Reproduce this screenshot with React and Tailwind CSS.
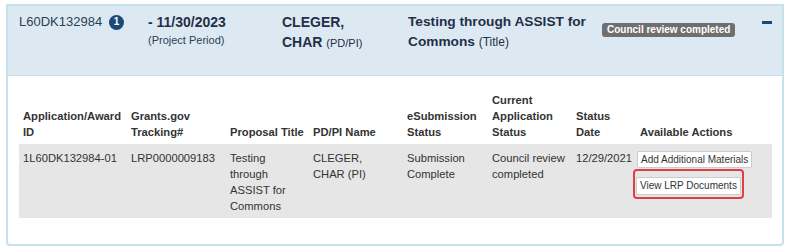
import React from "react";

const font = { fontFamily: '"Liberation Sans", Arial, sans-serif' };

function Header() {
    return (
        <div className="flex items-start bg-[#dde9f2] border-b border-[#c6dfe9] h-[70px] pl-[11px] pr-[10px] pt-[6px]">
            <div className="w-[129px] flex items-center gap-[7px] text-[13px] text-[#2c3e55] leading-[20px]">
                <span>L60DK132984</span>
                <span className="inline-flex items-center justify-center w-[15px] h-[15px] rounded-full bg-[#1c4a78] text-white text-[10px] font-bold leading-none">
                    1
                </span>
            </div>
            <div className="w-[134px] text-[#1f3049]">
                <div className="text-[14px] font-bold leading-[20px]">- 11/30/2023</div>
                <div className="text-[11px] leading-[16px] text-[#2c3e55]">(Project Period)</div>
            </div>
            <div className="w-[126px] text-[14px] font-bold leading-[20px] text-[#1f3049]">
                CLEGER,
                <br />
                CHAR <span className="text-[11px] leading-[14px] font-normal">(PD/PI)</span>
            </div>
            <div className="w-[194px] text-[13.7px] font-bold leading-[20px] text-[#1f3049]">
                Testing through ASSIST for
                <br />
                Commons <span className="text-[12px] leading-[14px] font-normal">(Title)</span>
            </div>
            <div className="mt-[4px]">
                <span className="inline-block rounded-[3px] bg-[#6f6f6f] px-[5px] py-[1px] text-[10px] font-bold leading-[12px] text-white">
                    Council review completed
                </span>
            </div>
            <div className="ml-auto mt-[9px] w-[10px] h-[3px] bg-[#1c4a78]" />
        </div>
    );
}

function Body() {
    const th = "align-bottom text-left font-bold text-[11.2px] leading-[16px] text-[#333] px-[4px] pb-[4px]";
    const td = "align-top text-[11.2px] leading-[16px] text-[#333] px-[4px] pt-[6px] pb-[4px]";
    return (
        <div className="px-[11px] pt-[16px]">
            <table className="table-fixed w-[753px] border-collapse">
                <colgroup>
                    <col className="w-[108px]" />
                    <col className="w-[99px]" />
                    <col className="w-[83px]" />
                    <col className="w-[94px]" />
                    <col className="w-[85px]" />
                    <col className="w-[84px]" />
                    <col className="w-[64px]" />
                    <col className="w-[136px]" />
                </colgroup>
                <thead>
                    <tr>
                        <th className={th}>Application/Award ID</th>
                        <th className={th}>Grants.gov Tracking#</th>
                        <th className={th}>Proposal Title</th>
                        <th className={th}>PD/PI Name</th>
                        <th className={th}>eSubmission Status</th>
                        <th className={th}>Current Application Status</th>
                        <th className={th}>Status Date</th>
                        <th className={th}>Available Actions</th>
                    </tr>
                </thead>
                <tbody>
                    <tr className="bg-[#e6e6e6]">
                        <td className={td + " text-[#2b4a70]"}>1L60DK132984-01</td>
                        <td className={td}>LRP0000009183</td>
                        <td className={td}>Testing through ASSIST for Commons</td>
                        <td className={td}>
                            CLEGER,
                            <br />
                            CHAR (PI)
                        </td>
                        <td className={td}>Submission Complete</td>
                        <td className={td}>Council review completed</td>
                        <td className={td}>12/29/2021</td>
                        <td className="align-top pt-[7px] pl-[1px]">
                            <div className="flex flex-col items-start">
                                <button className="bg-white border border-[#cccccc] rounded-[2px] px-[3px] h-[17px] text-[10px] leading-[15px] text-[#333]">
                                    Add Additional Materials
                                </button>
                                <div className="mt-[1px] -ml-[4px] rounded-[4px] border-[2.5px] border-[#e0403f] p-[1px]">
                                    <button className="bg-white border border-[#cccccc] rounded-[2px] px-[3px] h-[18px] text-[10px] leading-[16px] text-[#333]">
                                        View LRP Documents
                                    </button>
                                </div>
                            </div>
                        </td>
                    </tr>
                </tbody>
            </table>
        </div>
    );
}

export default function App() {
    return (
        <div className="bg-white w-[789px] h-[252px] pt-[4px] pl-[6px]" style={font}>
            <div className="w-[778px] h-[242px] border-2 border-[#c6e2eb] rounded-b-[4px] overflow-hidden">
                <Header />
                <Body />
            </div>
        </div>
    );
}
